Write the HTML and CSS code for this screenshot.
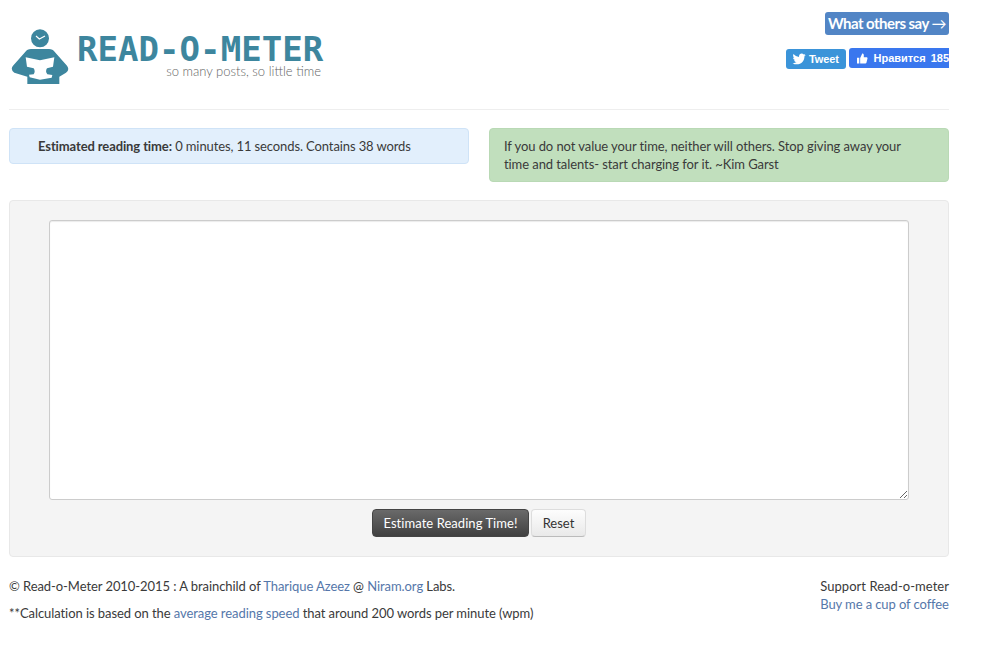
FILE: index.html
```html
<!DOCTYPE html>
<html lang="en">
<head>
<meta charset="utf-8">
<title>Read-o-Meter</title>
<link rel="stylesheet" href="styles.css">
</head>
<body>
<div class="page">
  <header class="header">
    <div class="brand">
      <svg class="brand-icon" viewBox="12 0 180 195" aria-hidden="true">
        <circle cx="105" cy="40" r="27" fill="#3d869e"/>
        <path d="M93 33l10 9 17-9" fill="none" stroke="#fff" stroke-width="3.500"/>
        <path d="M78 72H132Q143 72 150 82L186 122Q195 134 183 143L163 155V177H67V155L28 143Q15 134 24 122L60 82Q67 72 78 72Z" fill="#3d869e"/>
        <path d="M62 97L105 106 148 97 144 125 126 130Q120 140 127 148L142 150 140 158 105 164 74 157 72 149 86 148Q92 140 86 130L66 125Z" fill="#fff"/>
      </svg>
      <div class="brand-text">
        <div class="brand-name">READ-O-METER</div>
        <div class="brand-tag">so many posts, so little time</div>
      </div>
    </div>
    <div class="social">
      <a class="others" href="#">What others say <span class="arrow">→</span></a>
      <div class="social-row">
        <a class="tweet" href="#"><svg class="tw-icon" viewBox="0 0 24 24" aria-hidden="true"><path d="M23.643 4.937c-.835.37-1.732.62-2.675.733.962-.576 1.7-1.49 2.048-2.578-.9.534-1.897.922-2.958 1.13-.85-.904-2.06-1.47-3.4-1.47-2.572 0-4.658 2.086-4.658 4.66 0 .364.042.718.12 1.06-3.873-.195-7.304-2.05-9.602-4.868-.4.69-.63 1.49-.63 2.342 0 1.616.823 3.043 2.072 3.878-.764-.025-1.482-.234-2.11-.583v.06c0 2.257 1.605 4.14 3.737 4.568-.392.106-.803.162-1.227.162-.3 0-.593-.028-.877-.082.593 1.85 2.313 3.198 4.352 3.234-1.595 1.25-3.604 1.995-5.786 1.995-.376 0-.747-.022-1.112-.065 2.062 1.323 4.51 2.093 7.14 2.093 8.57 0 13.255-7.098 13.255-13.254 0-.2-.005-.402-.014-.602.91-.658 1.7-1.477 2.323-2.41z" fill="#fff"/></svg>Tweet</a>
        <a class="like" href="#"><svg class="fb-icon" viewBox="0 0 16 16" aria-hidden="true"><path d="M0 7h3.500v8.500H0zM4.800 7.200L8 .5c1.500 0 2.300 1 2.300 2.300V6H14.500c1 0 1.700.9 1.400 2l-1.600 6.300c-.2.800-.8 1.200-1.600 1.200H4.800z" fill="#fff"/></svg><span>Нравится</span><span class="like-count">185</span></a>
      </div>
    </div>
  </header>
  <hr class="rule">
  <section class="notes">
    <div class="note note-info"><b>Estimated reading time:</b> 0 minutes, 11 seconds. Contains 38 words</div>
    <div class="note note-quote">If you do not value your time, neither will others. Stop giving away your time and talents- start charging for it. ~Kim Garst</div>
  </section>
  <form class="well">
    <textarea class="input"></textarea>
    <div class="actions">
      <button type="button" class="btn btn-dark">Estimate Reading Time!</button>
      <button type="button" class="btn btn-light">Reset</button>
    </div>
  </form>
  <footer class="footer">
    <div class="credits">
      <p>© Read-o-Meter 2010-2015 : A brainchild of <a href="#">Tharique Azeez</a> @ <a href="#">Niram.org</a> Labs.</p>
      <p>**Calculation is based on the <a href="#">average reading speed</a> that around 200 words per minute (wpm)</p>
    </div>
    <div class="support">Support Read-o-meter<br><a href="#">Buy me a cup of coffee</a></div>
  </footer>
</div>
</body>
</html>
```
FILE: styles.css
```css
* { box-sizing: border-box; }
html, body { margin: 0; padding: 0; background: #fff; }
body { font-family: Lato, "Open Sans", sans-serif; font-size: 13px; line-height: 18px; letter-spacing: -0.08px; color: #3a3a3a; overflow: hidden; height: 660px; }
a { color: #5577aa; text-decoration: none; }
.page { width: 940px; margin-left: 9px; }

.header { display: flex; justify-content: space-between; height: 109px; }
.brand { display: flex; padding-top: 25px; height: 90px; }
.brand-icon { width: 60px; height: 65px; flex: none; }
.brand-text { margin-left: 8px; padding-top: 9px; width: 248px; }
.brand-name { font-family: "DejaVu Sans Mono", monospace; font-weight: 700; font-size: 34px; line-height: 30px; letter-spacing: 0.05px; color: #3d869e; white-space: nowrap; }
.brand-tag { font-size: 13px; font-weight: 300; line-height: 14px; letter-spacing: 0; color: #666; text-align: right; padding-right: 4px; }

.social { display: flex; flex-direction: column; align-items: flex-end; padding-top: 12px; }
.others { display: block; background: #5285c5; color: #fff; font-weight: 700; font-size: 15px; line-height: 23px; height: 23px; padding: 0 3px; border-radius: 3px; letter-spacing: -0.55px; }
.arrow { font-weight: 400; }
.social-row { display: flex; align-items: flex-start; gap: 3px; margin-top: 13px; width: 163px; overflow: hidden; }
.tweet, .like { display: flex; align-items: center; color: #fff; font-family: "Liberation Sans", sans-serif; font-weight: 700; font-size: 11px; height: 20px; border-radius: 3px; }
.tweet { flex: none; width: 60px; background: #3b94d9; padding-left: 6px; margin-top: 1px; letter-spacing: -0.1px; }
.tw-icon { width: 14px; height: 14px; margin-right: 3px; }
.like { flex: none; width: 100px; background: #3a77ee; padding-left: 8px; border-radius: 3px 0 0 3px; letter-spacing: 0; }
.fb-icon { width: 13px; height: 13px; margin-right: 6px; }
.like-count { margin-left: 5px; }

.rule { border: 0; border-top: 1px solid #eee; margin: 0 0 18px; }

.notes { display: flex; justify-content: space-between; align-items: flex-start; }
.note { flex: none; width: 460px; border-radius: 4px; border: 1px solid; }
.note-info { background: #e2effc; border-color: #cfe3f7; padding: 8px 14px 8px 28px; height: 36px; letter-spacing: -0.11px; }
.note-quote { background: #c1dfbd; border-color: #b9d9b5; padding: 8px 40px 8px 14px; height: 54px; }

.well { margin-top: 18px; height: 357px; background: #f4f4f4; border: 1px solid #e8e8e8; border-radius: 4px; padding: 19px 39px 0; }
.input { display: block; width: 860px; height: 280px; background: #fff; border: 1px solid #ccc; border-radius: 3px; box-shadow: inset 0 1px 1px rgba(0,0,0,.08); margin: 0; padding: 4px; resize: both; outline: 0; }
.actions { display: flex; justify-content: center; gap: 2px; margin-top: 9px; }
.btn { font-family: Lato, sans-serif; font-size: 13px; height: 28px; border-radius: 4px; padding: 0; cursor: pointer; }
.btn-dark { width: 157px; color: #fff; border: 1px solid #444; background: linear-gradient(#6a6a6a, #404040); letter-spacing: 0.05px; }
.btn-light { width: 55px; color: #333; border: 1px solid #ddd; border-bottom-color: #bbb; background: linear-gradient(#fdfdfd, #e9e9e9); }

.footer { display: flex; justify-content: space-between; margin-top: 20px; letter-spacing: -0.07px; }
.credits p { margin: 0 0 9px; }
.support { white-space: nowrap; letter-spacing: 0.04px; }
.support a { letter-spacing: -0.1px; }
```
